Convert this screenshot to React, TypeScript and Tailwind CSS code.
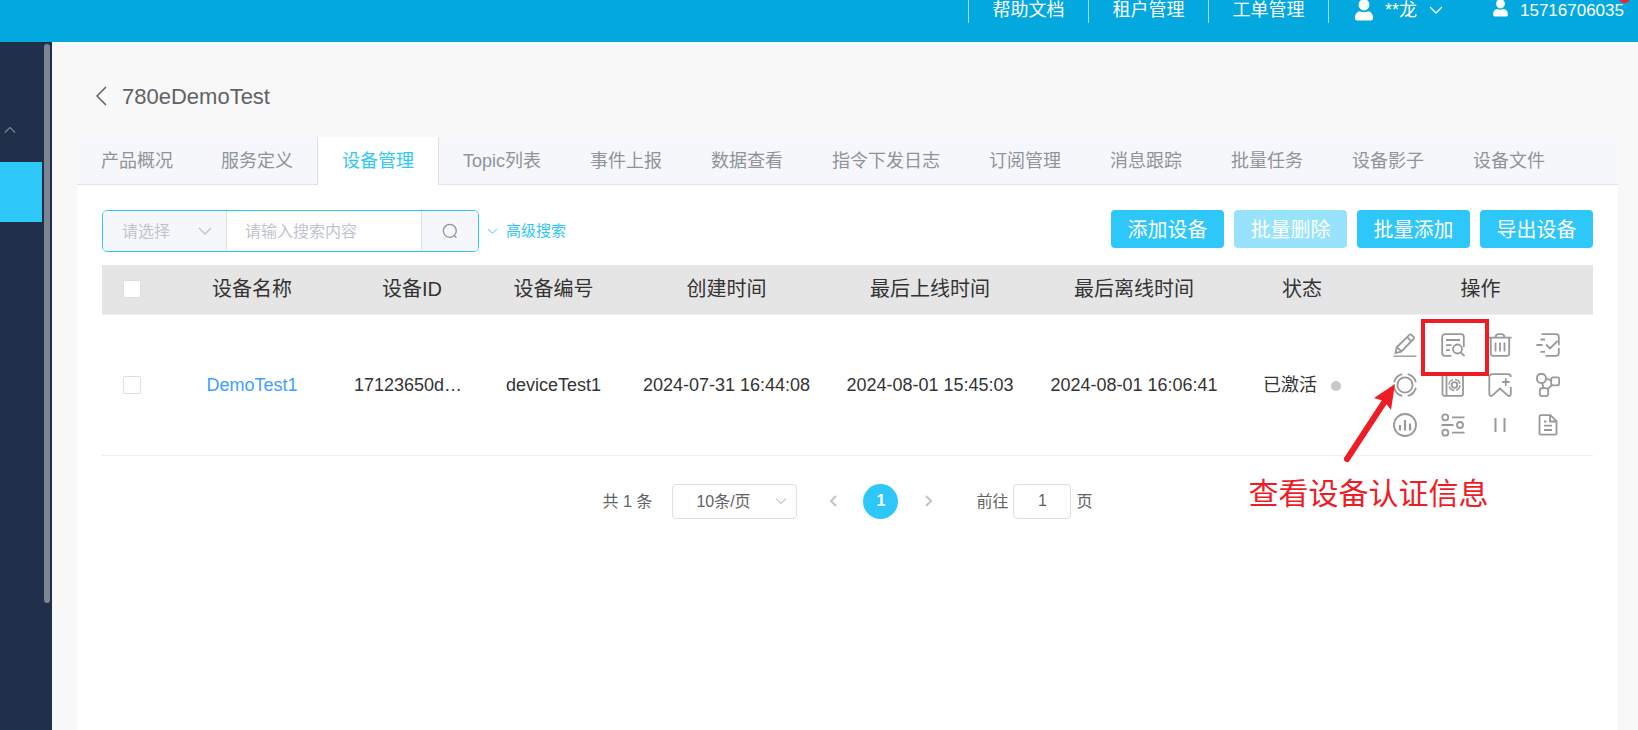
import React, { useState } from 'react';

const tabs = [
  '产品概况',
  '服务定义',
  '设备管理',
  'Topic列表',
  '事件上报',
  '数据查看',
  '指令下发日志',
  '订阅管理',
  '消息跟踪',
  '批量任务',
  '设备影子',
  '设备文件',
];

const columns = ['设备名称', '设备ID', '设备编号', '创建时间', '最后上线时间', '最后离线时间', '状态', '操作'];

const devices = [
  {
    name: 'DemoTest1',
    id: '17123650d…',
    code: 'deviceTest1',
    created: '2024-07-31 16:44:08',
    online: '2024-08-01 15:45:03',
    offline: '2024-08-01 16:06:41',
    status: '已激活',
  },
];

const actions = [
  {
    label: '编辑',
    icon: (
      <>
        <path d="M.5 23.200h23" strokeWidth="1.400" />
        <path d="M2.500 20l1.200-5.700L16.400 1.900a1.500 1.500 0 0 1 2.100 0l2 2a1.500 1.500 0 0 1 0 2.100L8.200 18.600 2.500 20zM14.200 4.200l4 4M4.200 14.300l4 3.900" />
      </>
    ),
  },
  {
    label: '查看认证信息',
    icon: (
      <>
        <path d="M10.5 22.800H4A2.800 2.800 0 0 1 1.200 20V4A2.800 2.800 0 0 1 4 1.200h16A2.800 2.800 0 0 1 22.800 4v10" />
        <path d="M5 7h14M5 12.200h5.500M5 17.200h4" />
        <circle cx="16.500" cy="16" r="4.500" />
        <path d="M19.800 19.300l3.700 3.700" />
      </>
    ),
  },
  {
    label: '删除',
    icon: (
      <>
        <path d="M.5 4.700h23M7.500 4.200c.3-2 1.500-3 3-3h3c1.500 0 2.700 1 3 3" />
        <path d="M2.800 4.700V20.500a2.300 2.300 0 0 0 2.300 2.300h13.800a2.300 2.300 0 0 0 2.300-2.300V4.700M7.500 9.500v9M12 9.500v9M16.500 9.500v9" />
      </>
    ),
  },
  {
    label: '下发指令',
    icon: (
      <>
        <path d="M5.500 1.200H20A2.800 2.800 0 0 1 22.800 4v8M22.800 15v5a2.800 2.800 0 0 1-2.800 2.800H9.500" />
        <path d="M4.500 6.500h4.500M.5 12h6M4.500 18.800h4.500M10 11.500l4 4 7.500-7.500" />
      </>
    ),
  },
  {
    label: '重置',
    icon: (
      <>
        <circle cx="12" cy="12" r="7.600" />
        <path d="M9.300 1.100A11.200 11.200 0 0 0 1.100 9.300M1.100 14.700a11.200 11.200 0 0 0 8.200 8.200M14.700 22.900a11.200 11.200 0 0 0 8.200-8.200M22.900 9.300a11.200 11.200 0 0 0-8.200-8.200" />
      </>
    ),
  },
  {
    label: '设备配置',
    icon: (
      <>
        <rect x="1.500" y="1.200" width="20.500" height="21.600" rx="2" />
        <path d="M5.500 1.200v21.600" />
        <circle cx="13.500" cy="12" r="5.500" strokeWidth="1.400" strokeDasharray="6.600 2" />
        <circle cx="13.500" cy="12" r="2.800" />
      </>
    ),
  },
  {
    label: '添加标签',
    icon: (
      <>
        <path d="M22.800 14v7c0 2-1.800 2.500-3.100 1.400L12 15.500l-7.500 6.900c-1.400 1.100-3.200.6-3.200-1.400V4a2.800 2.800 0 0 1 2.800-2.800h15.900A2.800 2.800 0 0 1 22.800 4" />
        <path d="M17.800 5.300v7.400M14.200 9h7.400" />
      </>
    ),
  },
  {
    label: '拓扑关系',
    icon: (
      <>
        <rect x="1" y="1" width="8.800" height="8.800" rx="3.500" />
        <rect x="15.200" y="4.300" width="8" height="8" rx="2" />
        <rect x="3.800" y="15.200" width="8.400" height="8" rx="2.500" />
        <path d="M9.800 5.500l5.400 1.800M6.200 9.800l1.300 5.400M15.800 12L11.500 16.300" />
      </>
    ),
  },
  {
    label: '数据统计',
    icon: (
      <>
        <circle cx="12" cy="12" r="11" />
        <path d="M7 12v5.500M12 7v10.500M17 10.500v7" strokeWidth="2.200" />
      </>
    ),
  },
  {
    label: '参数设置',
    icon: (
      <>
        <circle cx="4.300" cy="4.300" r="3" />
        <circle cx="19" cy="12" r="3" />
        <circle cx="4.300" cy="19.700" r="3" />
        <path d="M11 4.300h12.500M.5 12h12M11 19.700h12.500" />
      </>
    ),
  },
  { label: '暂停', icon: <path d="M7.500 5v14M16.500 5v14" strokeWidth="2" /> },
  {
    label: '设备日志',
    icon: (
      <>
        <path d="M14.500 2.200H5a1.500 1.500 0 0 0-1.500 1.500v16.500A1.500 1.500 0 0 0 5 21.700h14a1.500 1.500 0 0 0 1.500-1.500V8.300l-6-6.100zM14 2.500V8.500h6" />
        <path d="M8 8.500h2.500M8 12.700h8M8 17h8" />
      </>
    ),
  },
];

function Chevron({ className }: { className: string }) {
  return (
    <svg className={className} viewBox="0 0 14 8" fill="none" stroke="currentColor" strokeWidth="1.300" aria-hidden="true">
      <path d="M1 1l6 6 6-6" />
    </svg>
  );
}

function Person({ className }: { className: string }) {
  return (
    <svg className={className} viewBox="0 0 18 22" fill="currentColor" aria-hidden="true">
      <ellipse cx="9" cy="5.800" rx="5.400" ry="5.700" />
      <path d="M0 19c0-4 2-6.500 5-6.700 2 1.200 6 1.200 8 0 3 .2 5 2.700 5 6.700 0 1.800-.8 2.500-2.300 2.500H2.300C.8 21.500 0 20.800 0 19z" />
    </svg>
  );
}

function Checkbox({ label }: { label: string }) {
  return (
    <input
      type="checkbox"
      aria-label={label}
      className="block size-[18px] mx-auto appearance-none rounded-[2px] border border-[#dcdfe6] bg-white checked:bg-[#2ec7f9]"
    />
  );
}

function TopBar() {
  return (
    <header className="h-[42px] shrink-0 overflow-hidden bg-[#03a9de] text-white">
      <div className="-mt-1 flex justify-end pr-[14px] text-[18px]">
        <nav className="flex h-[27px] leading-[29px]">
          {['帮助文档', '租户管理', '工单管理'].map((item) => (
            <a key={item} href="#" className="w-[120px] border-l border-white/60 text-center">
              {item}
            </a>
          ))}
        </nav>
        <button type="button" className="flex h-[27px] items-center border-l border-white/60 pl-[26px]">
          <Person className="h-[22px] w-[18px]" />
          <span className="ml-3 pt-0.5">**龙</span>
          <Chevron className="ml-3 h-2 w-3.5" />
        </button>
        <a href="#" className="relative ml-[50px] flex h-[27px] items-center text-[17px]">
          <Person className="mb-1 h-[18px] w-[15px]" />
          <span className="ml-3 pt-0.5">15716706035</span>
          <span className="absolute -right-1.5 -top-1 size-[11px] rounded-full bg-[#f5222d]" />
        </a>
      </div>
    </header>
  );
}

function Sidebar() {
  return (
    <aside className="flex w-[52px] shrink-0 bg-[#20304a]">
      <div className="w-[42px] pt-[84px] text-[#8a93a3]">
        <Chevron className="ml-1 h-2 w-3 rotate-180" />
        <a href="#" aria-label="产品管理" className="mt-7 block h-[60px] bg-[#2ec7f9]" />
      </div>
      <div className="ml-0.5 mt-0.5 h-[559px] w-1.5 rounded-full bg-[#7d8594]" />
    </aside>
  );
}

function Toolbar() {
  return (
    <div className="flex items-start justify-between">
      <div className="flex items-center">
        <form className="flex h-[42px] w-[377px] overflow-hidden rounded-[5px] border border-[#2ec7f9] text-[16px]">
          <div className="relative flex w-[124px] shrink-0 border-r border-[#dcdfe6] bg-[#f5f7fa]">
            <select aria-label="搜索类型" defaultValue="" className="w-full appearance-none bg-transparent pl-[19px] pt-0.5 text-[#c0c4cc] outline-none">
              <option value="">请选择</option>
              <option value="name">设备名称</option>
            </select>
            <Chevron className="pointer-events-none absolute right-[14px] top-4 h-2 w-3.5 text-[#c0c4cc]" />
          </div>
          <input
            type="text"
            aria-label="搜索内容"
            placeholder="请输入搜索内容"
            className="min-w-0 flex-1 pl-[18px] pt-0.5 outline-none placeholder:text-[#c0c4cc]"
          />
          <button type="button" aria-label="搜索" className="flex w-[57px] items-center justify-center border-l border-[#dcdfe6] bg-[#f5f7fa] text-[#909399]">
            <svg className="size-4" viewBox="0 0 16 16" fill="none" stroke="currentColor" strokeWidth="1.300" aria-hidden="true">
              <circle cx="7.800" cy="7.800" r="6.500" />
              <path d="M12 12.500l2.500 2.200" />
            </svg>
          </button>
        </form>
        <button type="button" className="ml-2 flex items-center gap-2 text-[15px] text-[#2ec7f9]">
          <Chevron className="h-1.5 w-[11px]" />
          高级搜索
        </button>
      </div>
      <div className="flex gap-2.5 text-[20px] text-white">
        <button type="button" className="h-[38px] w-[113px] rounded bg-[#2ec7f9] pt-0.5">添加设备</button>
        <button type="button" disabled className="h-[38px] w-[113px] rounded bg-[#97e3fc] pt-0.5">批量删除</button>
        <button type="button" className="h-[38px] w-[113px] rounded bg-[#2ec7f9] pt-0.5">批量添加</button>
        <button type="button" className="h-[38px] w-[113px] rounded bg-[#2ec7f9] pt-0.5">导出设备</button>
      </div>
    </div>
  );
}

function DeviceTable() {
  return (
    <table className="mt-[13px] w-full table-fixed text-center text-[18px] text-[#333]">
      <colgroup>
        <col className="w-[60px]" />
        <col className="w-[180px]" />
        <col className="w-[140px]" />
        <col className="w-[143px]" />
        <col className="w-[203px]" />
        <col className="w-[204px]" />
        <col className="w-[204px]" />
        <col className="w-[132px]" />
        <col className="w-[225px]" />
      </colgroup>
      <thead>
        <tr className="h-[49px] border-b border-[#ebeef5] bg-[#e5e5e5] text-[20px]">
          <th>
            <Checkbox label="全选" />
          </th>
          {columns.map((column) => (
            <th key={column} className="font-normal">
              {column}
            </th>
          ))}
        </tr>
      </thead>
      <tbody>
        {devices.map((device) => (
          <tr key={device.id} className="h-[141px] border-b border-[#ebeef5]">
            <td>
              <Checkbox label={device.name} />
            </td>
            <td className="pt-0.5">
              <a href="#" className="text-[#409eff]">{device.name}</a>
            </td>
            <td className="pr-2 pt-0.5">{device.id}</td>
            <td className="pt-0.5">{device.code}</td>
            <td className="pt-0.5">{device.created}</td>
            <td className="pt-0.5">{device.online}</td>
            <td className="pt-0.5">{device.offline}</td>
            <td className="pt-0.5">
              <div className="flex items-center justify-center gap-[14px]">
                {device.status}
                <span className="size-2.5 rounded-full bg-[#c8c8c8]" />
              </div>
            </td>
            <td className="pr-2">
              <div className="relative mx-auto grid w-[190px] grid-cols-4">
                {actions.map((action) => (
                  <button key={action.label} type="button" aria-label={action.label} className="flex h-10 items-center justify-center text-[#999]">
                    <svg className="size-6" viewBox="0 0 24 24" fill="none" stroke="currentColor" strokeWidth="1.800" aria-hidden="true">
                      {action.icon}
                    </svg>
                  </button>
                ))}
                <Callout />
              </div>
            </td>
          </tr>
        ))}
      </tbody>
    </table>
  );
}

// Red guide mark over the "view credentials" action
function Callout() {
  return (
    <div className="pointer-events-none absolute inset-0">
      <div className="absolute -top-1.5 left-[39px] h-[57px] w-[68px] border-4 border-[#ee1c25]" />
      <svg className="absolute -left-10 top-[58px] h-[80px] w-[56px]" viewBox="0 0 56 80" aria-hidden="true">
        <path d="M5 76L43 18" stroke="#ee1c25" strokeWidth="6" strokeLinecap="round" />
        <path d="M53 1L32 15l10 3 7 9z" fill="#ee1c25" />
      </svg>
      <p className="absolute -left-[133px] top-[148px] whitespace-nowrap text-[30px] leading-[42px] text-[#ee1c25]">
        查看设备认证信息
      </p>
    </div>
  );
}

function Pagination() {
  return (
    <div className="mt-[28px] flex h-[35px] items-center justify-center text-[16px] text-[#606266]">
      <span className="pt-0.5">共 1 条</span>
      <div className="relative ml-5 h-full w-[125px]">
        <select aria-label="每页条数" className="size-full appearance-none rounded border border-[#dcdfe6] bg-white pl-[23px] pt-0.5 outline-none">
          <option>10条/页</option>
        </select>
        <Chevron className="pointer-events-none absolute right-2.5 top-[13px] h-2 w-3 text-[#c0c4cc]" />
      </div>
      <button type="button" aria-label="上一页" className="ml-[18px] flex h-full w-[35px] items-center justify-center text-[#c0c4cc]">
        <svg className="h-3 w-2" viewBox="0 0 8 12" fill="none" stroke="currentColor" strokeWidth="2" aria-hidden="true">
          <path d="M7 1L2 6l5 5" />
        </svg>
      </button>
      <button type="button" className="ml-[13px] size-[35px] rounded-full bg-[#2ec7f9] font-bold text-white">1</button>
      <button type="button" aria-label="下一页" className="ml-[13px] flex h-full w-[35px] items-center justify-center text-[#c0c4cc]">
        <svg className="h-3 w-2" viewBox="0 0 8 12" fill="none" stroke="currentColor" strokeWidth="2" aria-hidden="true">
          <path d="M1 1l5 5-5 5" />
        </svg>
      </button>
      <label className="ml-[30px] flex h-full items-center gap-[5px]">
        <span className="pt-0.5">前往</span>
        <input type="text" defaultValue="1" className="h-full w-[58px] rounded border border-[#dcdfe6] text-center outline-none" />
        <span className="pt-0.5">页</span>
      </label>
    </div>
  );
}

export default function App() {
  const [active, setActive] = useState('设备管理');

  return (
    <div className="flex min-h-screen flex-col bg-[#f8f8f8] font-['Liberation_Sans','Noto_Sans_CJK_SC',sans-serif]">
      <TopBar />
      <div className="flex flex-1">
        <Sidebar />
        <main className="flex min-w-0 flex-1 flex-col pl-[25px] pr-5">
          <div className="flex h-[95px] items-center gap-[15px] pl-[18px] pt-[13px] text-[22px] text-[#606266]">
            <button type="button" aria-label="返回">
              <svg className="h-5 w-3" viewBox="0 0 12 20" fill="none" stroke="currentColor" strokeWidth="1.500" aria-hidden="true">
                <path d="M11 1L2 10l9 9" />
              </svg>
            </button>
            <h1>780eDemoTest</h1>
          </div>
          <div role="tablist" className="flex h-12 shrink-0 border-b border-[#e0e4ed] bg-[#f5f7fa] text-[18px]">
            {tabs.map((tab) => (
              <button
                key={tab}
                type="button"
                role="tab"
                aria-selected={tab === active}
                onClick={() => setActive(tab)}
                className={
                  tab === active
                    ? '-mb-px -ml-px shrink-0 whitespace-nowrap border-x border-[#dcdfe6] bg-white px-6 pt-px text-[#2ec7f9]'
                    : 'shrink-0 whitespace-nowrap border-r border-transparent px-6 pt-0.5 text-[#909399] first:-mr-px'
                }
              >
                {tab}
              </button>
            ))}
          </div>
          <section className="flex-1 bg-white px-[25px] pt-[25px]">
            <Toolbar />
            <DeviceTable />
            <Pagination />
          </section>
        </main>
      </div>
    </div>
  );
}
